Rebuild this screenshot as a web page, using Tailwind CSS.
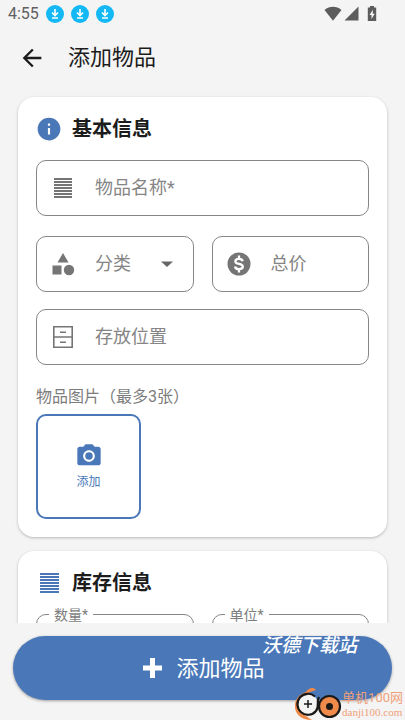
<!DOCTYPE html>
<html lang="zh-CN">
<head>
<meta charset="utf-8">
<meta name="viewport" content="width=device-width, initial-scale=1">
<title>添加物品</title>
<script src="https://cdn.jsdelivr.net/npm/@tailwindcss/browser@4"></script>
</head>
<body class="relative flex h-screen flex-col overflow-hidden bg-[#f4f4f4] font-[Roboto,'Noto_Sans_CJK_SC',sans-serif] text-[#1c1c1c]">

<div class="flex h-7 shrink-0 items-center px-2 text-[#606060]">
  <span class="w-8 text-base">4:55</span>
  <div class="ml-1.5 flex gap-[7px]">
    <svg class="size-[18px]" viewBox="0 0 18 18"><circle cx="9" cy="9" r="9" fill="#14b8f5"/><path d="M9 4v6M6 7.5l3 3 3-3M6 13h6" fill="none" stroke="#fff" stroke-width="1.6"/></svg>
    <svg class="size-[18px]" viewBox="0 0 18 18"><circle cx="9" cy="9" r="9" fill="#14b8f5"/><path d="M9 4v6M6 7.5l3 3 3-3M6 13h6" fill="none" stroke="#fff" stroke-width="1.6"/></svg>
    <svg class="size-[18px]" viewBox="0 0 18 18"><circle cx="9" cy="9" r="9" fill="#14b8f5"/><path d="M9 4v6M6 7.5l3 3 3-3M6 13h6" fill="none" stroke="#fff" stroke-width="1.6"/></svg>
  </div>
  <div class="mr-5 ml-auto flex items-center">
    <svg class="h-4 w-[18px]" viewBox="0 0 18 16" fill="#5c5c5c"><path d="M0.5 4C5.5-.2 12.5-.2 17.5 4L9 14.700Z"/></svg>
    <svg class="ml-0.5 h-4 w-[15px]" viewBox="0 0 15 16" fill="#5c5c5c"><path d="M14.500 .5v14H.500Z"/></svg>
    <svg class="ml-2 h-4 w-[10px]" viewBox="0 0 10 16"><path d="M3 0h4v1.500h2.200v13.500H.800v-13.500H3Z" fill="#5c5c5c"/><path d="M5.800 3.800 2.500 9h2v4l3.200-5.200h-1.900Z" fill="#f4f4f4"/></svg>
  </div>
</div>

<header class="flex h-[60px] shrink-0 items-center px-[18px]">
  <button type="button" aria-label="返回" class="mr-[22px]">
    <svg class="size-7" viewBox="0 0 24 24" fill="#1c1c1c"><path d="M20 11H7.830l5.590-5.590L12 4l-8 8 8 8 1.410-1.410L7.830 13H20v-2z"/></svg>
  </button>
  <h1 class="text-[22px] leading-8">添加物品</h1>
</header>

<main class="min-h-0 flex-1 overflow-y-auto px-[18px] pt-[9px] [scrollbar-width:none]">
  <section class="mb-3.5 rounded-2xl bg-white p-[18px] pt-4 shadow-[0_1px_3px_rgba(0,0,0,0.25)]">
    <h2 class="flex h-8 items-center gap-2.5 text-xl font-bold">
      <svg class="size-[26px]" viewBox="0 0 24 24" fill="#4977b8"><path d="M12 1.500a10.500 10.500 0 1 0 0 21 10.500 10.500 0 0 0 0-21zm1 15.500h-2v-6h2zm0-8h-2V7h2z"/></svg>
      基本信息
    </h2>

    <label class="mt-[15px] flex h-14 items-center rounded-[10px] border border-[#868686] px-3.5 text-lg text-[#858585]">
      <svg class="mr-5 size-6 shrink-0" viewBox="0 0 24 24" fill="#757575"><path d="M3 2h18v2H3zM3 5h18v2H3zM3 8h18v2H3zM3 11h18v2H3zM3 14h18v2H3zM3 17h18v2H3zM3 20h18v2H3z"/></svg>
      物品名称*
      <input type="text" class="h-full min-w-0 flex-1 bg-transparent outline-none">
    </label>

    <div class="mt-5 grid grid-cols-2 gap-[18px]">
      <label class="flex h-14 items-center rounded-[10px] border border-[#868686] px-3.5 text-lg text-[#858585]">
        <svg class="mr-5 size-6 shrink-0" viewBox="0 0 24 24" fill="#757575"><path d="M12 1 6.500 10.500h11zM1.500 13.500h9v9h-9z"/><circle cx="18" cy="18" r="5.200"/></svg>
        分类
        <select class="h-full min-w-0 flex-1 appearance-none bg-transparent outline-none"><option value=""></option></select>
        <svg class="size-6 shrink-0" viewBox="0 0 24 24" fill="#666"><path d="M6 9.500h12l-6 5.500z"/></svg>
      </label>
      <label class="flex h-14 items-center rounded-[10px] border border-[#868686] px-3.5 text-lg text-[#858585]">
        <svg class="mr-5 size-6 shrink-0" viewBox="0 0 24 24"><circle cx="12" cy="12" r="11.500" fill="#757575"/><path d="M12 3.500v3M12 17.500v3M15.700 9.300C15.300 7.600 14 6.900 12 6.900c-2.200 0-3.600 1-3.600 2.500 0 3.600 7.400 1.500 7.400 5.200 0 1.600-1.600 2.600-3.800 2.600s-3.700-.9-4-2.700" fill="none" stroke="#fff" stroke-width="2.300"/></svg>
        总价
        <input type="text" inputmode="decimal" class="h-full min-w-0 flex-1 bg-transparent outline-none">
      </label>
    </div>

    <label class="mt-[17px] flex h-14 items-center rounded-[10px] border border-[#868686] px-3.5 text-lg text-[#858585]">
      <svg class="mr-5 size-6 shrink-0" viewBox="0 0 24 24" fill="none" stroke="#757575" stroke-width="1.600"><path d="M2.800 1.800h18.400v20.400H2.800zM2.800 12h18.400M9 7.300h6M9 17.300h6"/></svg>
      存放位置
      <input type="text" class="h-full min-w-0 flex-1 bg-transparent outline-none">
    </label>

    <p class="mt-5 h-[29px] text-base leading-6 text-[#7c7c7c]">物品图片（最多3张）</p>
    <button type="button" class="flex size-[105px] flex-col items-center justify-center gap-0.5 rounded-[10px] border-2 border-[#4977b8] text-xs leading-5 text-[#4977b8]">
      <svg class="size-7" viewBox="0 0 24 24" fill="#4977b8"><circle cx="12" cy="12" r="3.200"/><path d="M9 2 7.170 4H4c-1.100 0-2 .9-2 2v12c0 1.100.9 2 2 2h16c1.100 0 2-.9 2-2V6c0-1.100-.9-2-2-2h-3.170L15 2H9zm3 15c-2.760 0-5-2.240-5-5s2.240-5 5-5 5 2.240 5 5-2.240 5-5 5z"/></svg>
      添加
    </button>
  </section>

  <section class="rounded-2xl bg-white p-[18px] pt-4 shadow-[0_1px_3px_rgba(0,0,0,0.25)]">
    <h2 class="flex h-8 items-center gap-2.5 text-xl font-bold">
      <svg class="size-[26px]" viewBox="0 0 26 26" fill="#4977b8"><path d="M4 3h19v2H4zM4 6h19v2H4zM4 9h19v2H4zM4 12h19v2H4zM4 15h19v2H4zM4 18h19v2H4zM4 21h19v2H4z"/></svg>
      库存信息
    </h2>
    <div class="mt-[15px] grid grid-cols-2 gap-[18px]">
      <label class="relative flex h-14 items-center rounded-[10px] border border-[#868686] px-3.5">
        <span class="absolute -top-2.5 left-3 bg-white px-[5px] text-sm leading-5 text-[#7c7c7c]">数量*</span>
        <input type="text" inputmode="numeric" class="h-full min-w-0 flex-1 bg-transparent text-lg outline-none">
      </label>
      <label class="relative flex h-14 items-center rounded-[10px] border border-[#868686] px-3.5">
        <span class="absolute -top-2.5 left-3 bg-white px-[5px] text-sm leading-5 text-[#7c7c7c]">单位*</span>
        <input type="text" class="h-full min-w-0 flex-1 bg-transparent text-lg outline-none">
      </label>
    </div>
  </section>
</main>

<footer class="shrink-0 bg-[#f4f4f4] px-[13px] pt-[13px] pb-5">
  <button type="button" class="flex h-16 w-full items-center justify-center gap-3 rounded-full bg-[#4977b8] text-[22px] text-white shadow-[0_1px_3px_rgba(0,0,0,0.35)]">
    <svg class="size-6" viewBox="0 0 24 24" fill="#fff"><path d="M10 2h5v7.500h7v5h-7V22h-5v-7.500H3v-5h7z"/></svg>
    添加物品
  </button>
</footer>

<div class="pointer-events-none absolute right-12 bottom-[60px] text-[19px] leading-7 font-medium text-white italic">沃德下载站</div>
<div class="pointer-events-none absolute right-0.5 bottom-0 flex items-center text-[#f0a078]">
  <svg class="h-8 w-12" viewBox="0 0 48 32">
    <path d="M12 4C15-1 20-1 22 2L16 4C4 9 2 22 12 28L18 32C6 32 0 25 1 16 2 10 6 6 12 4Z" fill="#f08a4b"/>
    <circle cx="14" cy="16" r="10" fill="#f4f4f4"/>
    <path d="M21 8.500A10.500 10.500 0 1 0 22 23C26 18 22 14 25 9" fill="none" stroke="#1b1918" stroke-width="2.200"/>
    <path d="M14 12v8M10 16h8" stroke="#1b1918" stroke-width="1.500"/>
    <circle cx="35.500" cy="18.500" r="10.500" fill="#f08a4b" stroke="#1b1918" stroke-width="2.200"/>
    <circle cx="35.500" cy="18.500" r="3.500" fill="#1b1918"/>
  </svg>
  <div class="flex flex-col">
    <span class="text-[13px] leading-4">单机100网</span>
    <span class="font-['Liberation_Serif',serif] text-[11px] leading-3">danji100.com</span>
  </div>
</div>
</body>
</html>
